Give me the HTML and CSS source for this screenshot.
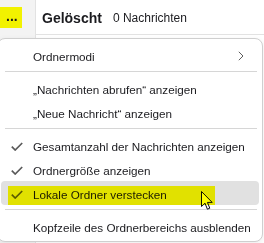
FILE: index.html
```html
<!DOCTYPE html>
<html lang="de">
<head>
    <meta charset="UTF-8">
    <meta name="viewport" content="width=device-width, initial-scale=1.0">
    <title>Ordnerbereich</title>
    <link rel="stylesheet" href="styles.css">
</head>
<body>
    <div class="app">
        <aside class="sidebar">
            <span class="more-btn">...</span>
        </aside>
        <main class="main">
            <div class="folder-head">
                <span class="folder-name">Gelöscht</span>
                <span class="folder-count">0 Nachrichten</span>
            </div>
        </main>

        <div class="menu">
            <div class="menu-item">
                <span class="check"></span>
                <span class="label">Ordnermodi</span>
                <svg class="chevron" width="6" height="10" viewBox="0 0 6 10"><path d="M0.8 0.8 L5 5 L0.8 9.2" fill="none" stroke="#5c5c5c" stroke-width="1"/></svg>
            </div>
            <div class="menu-sep"></div>
            <div class="menu-item">
                <span class="check"></span>
                <span class="label">„Nachrichten abrufen“ anzeigen</span>
            </div>
            <div class="menu-item">
                <span class="check"></span>
                <span class="label">„Neue Nachricht“ anzeigen</span>
            </div>
            <div class="menu-sep"></div>
            <div class="menu-item">
                <span class="check"><svg width="12" height="9" viewBox="0 0 12 9"><path d="M0.8 4.6 L4.2 8 L11.2 1" fill="none" stroke="#5a5a5a" stroke-width="1.7"/></svg></span>
                <span class="label">Gesamtanzahl der Nachrichten anzeigen</span>
            </div>
            <div class="menu-item">
                <span class="check"><svg width="12" height="9" viewBox="0 0 12 9"><path d="M0.8 4.6 L4.2 8 L11.2 1" fill="none" stroke="#5a5a5a" stroke-width="1.7"/></svg></span>
                <span class="label">Ordnergröße anzeigen</span>
            </div>
            <div class="menu-item hover">
                <span class="check"><svg width="12" height="9" viewBox="0 0 12 9"><path d="M0.8 4.6 L4.2 8 L11.2 1" fill="none" stroke="#5a5a5a" stroke-width="1.7"/></svg></span>
                <span class="label">Lokale Ordner verstecken</span>
                <svg class="cursor" width="13" height="20" viewBox="0 0 13 20"><path d="M0.5 0.5 L0.5 15.5 L4 12.2 L6.4 18.2 L8.8 17.2 L6.4 11.4 L11.2 11.4 Z" fill="#ffffff" stroke="#111111" stroke-width="1" stroke-linejoin="round"/></svg>
                <span class="marker"></span>
            </div>
            <div class="menu-sep"></div>
            <div class="menu-item">
                <span class="check"></span>
                <span class="label">Kopfzeile des Ordnerbereichs ausblenden</span>
            </div>
        </div>
    </div>
</body>
</html>
```

FILE: styles.css
```css
:root {
    --text-color: #1b1b1f;
    --pane-color: #f3f3f3;
    --line-color: #e2e2e2;
    --marker-color: #ffff00;
}

body {
    margin: 0;
    font-family: 'Liberation Sans', Arial, sans-serif;
    color: var(--text-color);
    background: #ffffff;
}

.app {
    position: relative;
    display: grid;
    grid-template-columns: 36px 1fr;
    height: 243px;
    overflow: hidden;
}

.sidebar {
    background-color: var(--pane-color);
    border-right: 1px solid var(--line-color);
    padding-top: 7px;
}

.more-btn {
    display: block;
    width: 22px;
    height: 21px;
    background-color: #f2f200;
    font-size: 14px;
    font-weight: bold;
    line-height: 19px;
    padding-left: 6px;
    box-sizing: border-box;
}

.folder-head {
    height: 35px;
    box-sizing: border-box;
    border-bottom: 1px solid var(--line-color);
    display: flex;
    align-items: center;
    padding: 2px 0 0 6px;
}

.folder-name {
    font-size: 14px;
    font-weight: bold;
    margin-right: 11px;
}

.folder-count {
    font-size: 12px;
}

/* Kontextmenu */
.menu {
    position: absolute;
    top: 38px;
    left: -3px;
    width: 266px;
    box-sizing: border-box;
    background: #ffffff;
    border: 1px solid #cfcfcf;
    border-radius: 8px;
    padding: 4px 3px 3px;
    box-shadow: 0 2px 6px rgba(0, 0, 0, 0.08);
}

.menu-item {
    position: relative;
    display: flex;
    align-items: center;
    height: 24px;
    box-sizing: border-box;
    padding: 2px 0 0 10px;
    border-radius: 4px;
    font-size: 11.7px;
}

.menu-item.hover {
    background-color: #e1e1e1;
}

.check {
    width: 12px;
    height: 9px;
    margin-right: 10px;
    display: flex;
}

.label {
    white-space: nowrap;
}

.chevron {
    margin-left: auto;
    margin-right: 15px;
}

.menu-sep {
    height: 1px;
    background-color: #d6d6d6;
    margin: 4px 2px 4px 4px;
}

.cursor {
    position: absolute;
    left: 200px;
    top: 10px;
}

.marker {
    position: absolute;
    left: 7px;
    top: 5px;
    width: 207px;
    height: 19px;
    background-color: var(--marker-color);
    mix-blend-mode: multiply;
}
```
